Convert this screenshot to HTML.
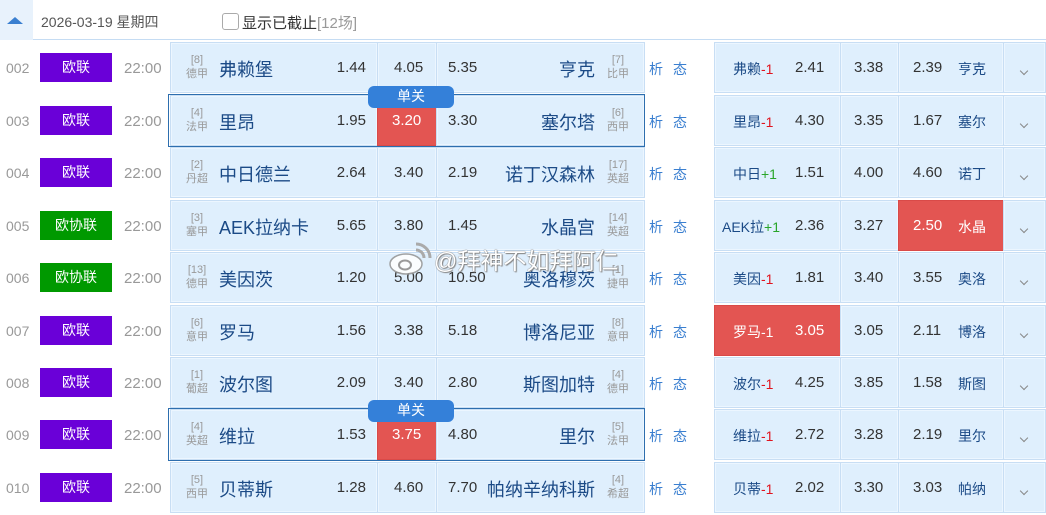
<!DOCTYPE html>
<html><head><meta charset="utf-8"><style>
*{margin:0;padding:0;box-sizing:border-box}
body{width:1046px;height:515px;overflow:hidden;background:#fff;font-family:"Liberation Sans","Noto Sans CJK SC",sans-serif;position:relative}
.a{position:absolute;white-space:nowrap}
.hdr{position:absolute;left:0;top:0;width:1046px;height:40px;border-bottom:1px solid #c5dcf3}
.row{position:absolute;left:0;width:1046px;height:53px}
.idx{left:6px;top:19px;font-size:14px;color:#999}
.bd{left:40px;top:12px;width:72px;height:29px;color:#fff;font-size:14px;text-align:center;line-height:29px}
.p{background:#6a00d8}.g{background:#009900}
.tm{left:124px;top:19px;font-size:15px;color:#999}
.c{position:absolute;top:1px;height:51px;background:#dfeffd;border:1px solid #c8def4;box-shadow:inset 0 0 0 1px #ecf6ff}
.rk{position:absolute;width:26px;text-align:center;color:#999;font-size:11px;line-height:14px;top:10px}
.nm{position:absolute;top:13px;font-size:18px;color:#1b4a86}
.od{position:absolute;top:16px;font-size:15px;color:#333}
.xt{position:absolute;top:18px;font-size:14px;color:#3a7fd0;letter-spacing:10px}
.hc{position:absolute;top:16px;font-size:14px;color:#1b4a86}
.r{color:#e0141e}.gr{color:#2aa52a}
.chev{position:absolute;left:17px;top:25px;width:6px;height:6px;border-right:1.5px solid #888;border-bottom:1.5px solid #888;transform:rotate(45deg)}
.red{background:#e35552!important;box-shadow:none!important;border-color:#d94a48!important}
.red *{color:#fff!important}
.hl{position:absolute;left:168px;top:0;width:477px;height:53px;border:1px solid #2d6eae}
.tab{position:absolute;left:368px;top:-8px;width:86px;height:22px;background:#3480d9;border-radius:6px;color:#fff;font-size:14px;text-align:center;line-height:20px}
</style></head><body>
<div class="hdr">
 <div class="a" style="left:0;top:0;width:33px;height:40px;background:#e8f2fc"></div>
 <div class="a" style="left:7px;top:17px;width:0;height:0;border-left:8px solid transparent;border-right:8px solid transparent;border-bottom:7px solid #3a7fd0"></div>
 <div class="a" style="left:41px;top:12px;font-size:14px;color:#555">2026-03-19 星期四</div>
 <div class="a" style="left:222px;top:13px;width:17px;height:17px;border:1px solid #aaa;border-radius:3px"></div>
 <div class="a" style="left:242px;top:12px;font-size:15px;color:#333">显示已截止<span style="color:#999">[12场]</span></div>
</div>

<div class="row" style="top:41px">
 <div class="a idx">002</div><div class="a bd p">欧联</div><div class="a tm">22:00</div>
 <div class="c" style="left:170px;width:208px"><div class="rk" style="left:13px">[8]<br>德甲</div><div class="nm" style="left:48px">弗赖堡</div><div class="od" style="right:11px">1.44</div></div>
 <div class="c" style="left:377px;width:60px"><div class="od" style="left:16px">4.05</div></div>
 <div class="c" style="left:436px;width:209px"><div class="od" style="left:11px">5.35</div><div class="nm" style="right:49px">亨克</div><div class="rk" style="right:13px">[7]<br>比甲</div></div>
 <div class="xt" style="left:649px">析态</div>
 <div class="c" style="left:714px;width:127px"><div class="hc" style="left:18px">弗赖<span class="r">-1</span></div><div class="od" style="left:80px">2.41</div></div>
 <div class="c" style="left:840px;width:59px"><div class="od" style="left:13px">3.38</div></div>
 <div class="c" style="left:898px;width:106px"><div class="od" style="left:14px">2.39</div><div class="hc" style="left:59px">亨克</div></div>
 <div class="c" style="left:1003px;width:43px"><div class="chev"></div></div>
</div>

<div class="row" style="top:94px">
 <div class="a idx">003</div><div class="a bd p">欧联</div><div class="a tm">22:00</div>
 <div class="c" style="left:170px;width:208px"><div class="rk" style="left:13px">[4]<br>法甲</div><div class="nm" style="left:48px">里昂</div><div class="od" style="right:11px">1.95</div></div>
 <div class="c red" style="left:377px;width:60px"><div class="od" style="left:14px">3.20</div></div>
 <div class="c" style="left:436px;width:209px"><div class="od" style="left:11px">3.30</div><div class="nm" style="right:49px">塞尔塔</div><div class="rk" style="right:13px">[6]<br>西甲</div></div>
 <div class="xt" style="left:649px">析态</div>
 <div class="c" style="left:714px;width:127px"><div class="hc" style="left:18px">里昂<span class="r">-1</span></div><div class="od" style="left:80px">4.30</div></div>
 <div class="c" style="left:840px;width:59px"><div class="od" style="left:13px">3.35</div></div>
 <div class="c" style="left:898px;width:106px"><div class="od" style="left:14px">1.67</div><div class="hc" style="left:59px">塞尔</div></div>
 <div class="c" style="left:1003px;width:43px"><div class="chev"></div></div>
 <div class="hl"></div><div class="tab">单关</div>
</div>

<div class="row" style="top:146px">
 <div class="a idx">004</div><div class="a bd p">欧联</div><div class="a tm">22:00</div>
 <div class="c" style="left:170px;width:208px"><div class="rk" style="left:13px">[2]<br>丹超</div><div class="nm" style="left:48px">中日德兰</div><div class="od" style="right:11px">2.64</div></div>
 <div class="c" style="left:377px;width:60px"><div class="od" style="left:16px">3.40</div></div>
 <div class="c" style="left:436px;width:209px"><div class="od" style="left:11px">2.19</div><div class="nm" style="right:49px">诺丁汉森林</div><div class="rk" style="right:13px">[17]<br>英超</div></div>
 <div class="xt" style="left:649px">析态</div>
 <div class="c" style="left:714px;width:127px"><div class="hc" style="left:18px">中日<span class="gr">+1</span></div><div class="od" style="left:80px">1.51</div></div>
 <div class="c" style="left:840px;width:59px"><div class="od" style="left:13px">4.00</div></div>
 <div class="c" style="left:898px;width:106px"><div class="od" style="left:14px">4.60</div><div class="hc" style="left:59px">诺丁</div></div>
 <div class="c" style="left:1003px;width:43px"><div class="chev"></div></div>
</div>

<div class="row" style="top:199px">
 <div class="a idx">005</div><div class="a bd g">欧协联</div><div class="a tm">22:00</div>
 <div class="c" style="left:170px;width:208px"><div class="rk" style="left:13px">[3]<br>塞甲</div><div class="nm" style="left:48px">AEK拉纳卡</div><div class="od" style="right:11px">5.65</div></div>
 <div class="c" style="left:377px;width:60px"><div class="od" style="left:16px">3.80</div></div>
 <div class="c" style="left:436px;width:209px"><div class="od" style="left:11px">1.45</div><div class="nm" style="right:49px">水晶宫</div><div class="rk" style="right:13px">[14]<br>英超</div></div>
 <div class="xt" style="left:649px">析态</div>
 <div class="c" style="left:714px;width:127px"><div class="hc" style="left:7px">AEK拉<span class="gr">+1</span></div><div class="od" style="left:80px">2.36</div></div>
 <div class="c" style="left:840px;width:59px"><div class="od" style="left:13px">3.27</div></div>
 <div class="c red" style="left:898px;width:106px"><div class="od" style="left:14px">2.50</div><div class="hc" style="left:59px">水晶</div></div>
 <div class="c" style="left:1003px;width:43px"><div class="chev"></div></div>
</div>

<div class="row" style="top:251px">
 <div class="a idx">006</div><div class="a bd g">欧协联</div><div class="a tm">22:00</div>
 <div class="c" style="left:170px;width:208px"><div class="rk" style="left:13px">[13]<br>德甲</div><div class="nm" style="left:48px">美因茨</div><div class="od" style="right:11px">1.20</div></div>
 <div class="c" style="left:377px;width:60px"><div class="od" style="left:16px">5.00</div></div>
 <div class="c" style="left:436px;width:209px"><div class="od" style="left:11px">10.50</div><div class="nm" style="right:49px">奥洛穆茨</div><div class="rk" style="right:13px">[1]<br>捷甲</div></div>
 <div class="xt" style="left:649px">析态</div>
 <div class="c" style="left:714px;width:127px"><div class="hc" style="left:18px">美因<span class="r">-1</span></div><div class="od" style="left:80px">1.81</div></div>
 <div class="c" style="left:840px;width:59px"><div class="od" style="left:13px">3.40</div></div>
 <div class="c" style="left:898px;width:106px"><div class="od" style="left:14px">3.55</div><div class="hc" style="left:59px">奥洛</div></div>
 <div class="c" style="left:1003px;width:43px"><div class="chev"></div></div>
</div>

<div class="row" style="top:304px">
 <div class="a idx">007</div><div class="a bd p">欧联</div><div class="a tm">22:00</div>
 <div class="c" style="left:170px;width:208px"><div class="rk" style="left:13px">[6]<br>意甲</div><div class="nm" style="left:48px">罗马</div><div class="od" style="right:11px">1.56</div></div>
 <div class="c" style="left:377px;width:60px"><div class="od" style="left:16px">3.38</div></div>
 <div class="c" style="left:436px;width:209px"><div class="od" style="left:11px">5.18</div><div class="nm" style="right:49px">博洛尼亚</div><div class="rk" style="right:13px">[8]<br>意甲</div></div>
 <div class="xt" style="left:649px">析态</div>
 <div class="c red" style="left:714px;width:127px"><div class="hc" style="left:18px">罗马-1</div><div class="od" style="left:80px">3.05</div></div>
 <div class="c" style="left:840px;width:59px"><div class="od" style="left:13px">3.05</div></div>
 <div class="c" style="left:898px;width:106px"><div class="od" style="left:14px">2.11</div><div class="hc" style="left:59px">博洛</div></div>
 <div class="c" style="left:1003px;width:43px"><div class="chev"></div></div>
</div>

<div class="row" style="top:356px">
 <div class="a idx">008</div><div class="a bd p">欧联</div><div class="a tm">22:00</div>
 <div class="c" style="left:170px;width:208px"><div class="rk" style="left:13px">[1]<br>葡超</div><div class="nm" style="left:48px">波尔图</div><div class="od" style="right:11px">2.09</div></div>
 <div class="c" style="left:377px;width:60px"><div class="od" style="left:16px">3.40</div></div>
 <div class="c" style="left:436px;width:209px"><div class="od" style="left:11px">2.80</div><div class="nm" style="right:49px">斯图加特</div><div class="rk" style="right:13px">[4]<br>德甲</div></div>
 <div class="xt" style="left:649px">析态</div>
 <div class="c" style="left:714px;width:127px"><div class="hc" style="left:18px">波尔<span class="r">-1</span></div><div class="od" style="left:80px">4.25</div></div>
 <div class="c" style="left:840px;width:59px"><div class="od" style="left:13px">3.85</div></div>
 <div class="c" style="left:898px;width:106px"><div class="od" style="left:14px">1.58</div><div class="hc" style="left:59px">斯图</div></div>
 <div class="c" style="left:1003px;width:43px"><div class="chev"></div></div>
</div>

<div class="row" style="top:408px">
 <div class="a idx">009</div><div class="a bd p">欧联</div><div class="a tm">22:00</div>
 <div class="c" style="left:170px;width:208px"><div class="rk" style="left:13px">[4]<br>英超</div><div class="nm" style="left:48px">维拉</div><div class="od" style="right:11px">1.53</div></div>
 <div class="c red" style="left:377px;width:60px"><div class="od" style="left:14px">3.75</div></div>
 <div class="c" style="left:436px;width:209px"><div class="od" style="left:11px">4.80</div><div class="nm" style="right:49px">里尔</div><div class="rk" style="right:13px">[5]<br>法甲</div></div>
 <div class="xt" style="left:649px">析态</div>
 <div class="c" style="left:714px;width:127px"><div class="hc" style="left:18px">维拉<span class="r">-1</span></div><div class="od" style="left:80px">2.72</div></div>
 <div class="c" style="left:840px;width:59px"><div class="od" style="left:13px">3.28</div></div>
 <div class="c" style="left:898px;width:106px"><div class="od" style="left:14px">2.19</div><div class="hc" style="left:59px">里尔</div></div>
 <div class="c" style="left:1003px;width:43px"><div class="chev"></div></div>
 <div class="hl"></div><div class="tab">单关</div>
</div>

<div class="row" style="top:461px">
 <div class="a idx">010</div><div class="a bd p">欧联</div><div class="a tm">22:00</div>
 <div class="c" style="left:170px;width:208px"><div class="rk" style="left:13px">[5]<br>西甲</div><div class="nm" style="left:48px">贝蒂斯</div><div class="od" style="right:11px">1.28</div></div>
 <div class="c" style="left:377px;width:60px"><div class="od" style="left:16px">4.60</div></div>
 <div class="c" style="left:436px;width:209px"><div class="od" style="left:11px">7.70</div><div class="nm" style="right:49px">帕纳辛纳科斯</div><div class="rk" style="right:13px">[4]<br>希超</div></div>
 <div class="xt" style="left:649px">析态</div>
 <div class="c" style="left:714px;width:127px"><div class="hc" style="left:18px">贝蒂<span class="r">-1</span></div><div class="od" style="left:80px">2.02</div></div>
 <div class="c" style="left:840px;width:59px"><div class="od" style="left:13px">3.30</div></div>
 <div class="c" style="left:898px;width:106px"><div class="od" style="left:14px">3.03</div><div class="hc" style="left:59px">帕纳</div></div>
 <div class="c" style="left:1003px;width:43px"><div class="chev"></div></div>
</div>

<svg class="a" style="left:388px;top:240px" width="46" height="36" viewBox="0 0 46 36">
 <ellipse cx="18" cy="24" rx="16" ry="10" fill="#fff" stroke="#999" stroke-width="1.5" opacity="0.9"/>
 <ellipse cx="17" cy="25" rx="6" ry="4.5" fill="none" stroke="#999" stroke-width="2"/>
 <path d="M28 10 a8 8 0 0 1 8 8 M28 4 a14 14 0 0 1 14 14" fill="none" stroke="#aaa" stroke-width="3"/>
</svg>
<div class="a" style="left:434px;top:242px;font-size:23px;color:#fff;text-shadow:0 0 1px #777,0 0 1px #777,1px 1px 1px #888">@拜神不如拜阿仁</div>
</body></html>
